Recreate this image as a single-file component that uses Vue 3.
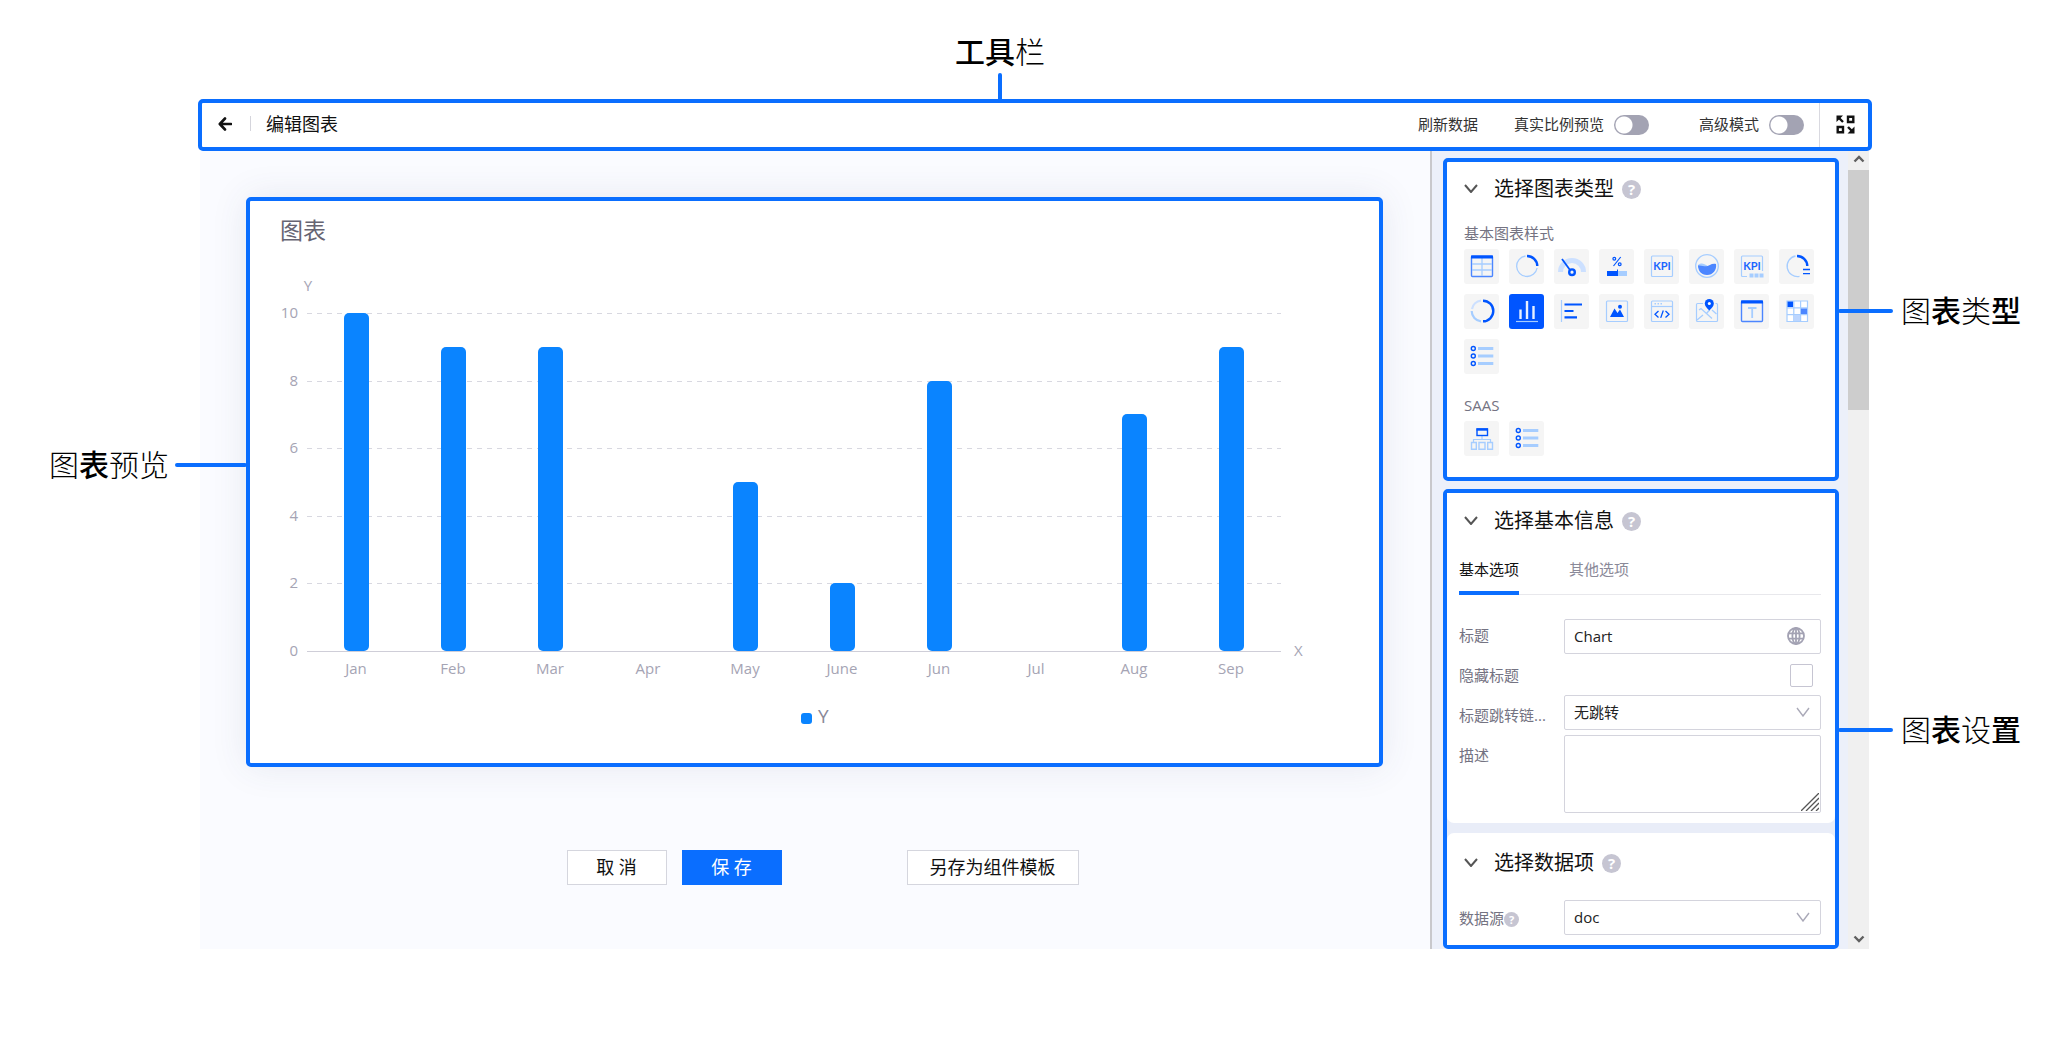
<script setup>
import { ref } from 'vue'

const realScale = ref(false)
const advanced = ref(false)
const title = ref('Chart')
const hideTitle = ref(false)
const description = ref('')
const activeTab = ref(0)
const selectedType = ref('bar')

const tabs = ['基本选项', '其他选项']

// Callout captions: each glyph carries its own weight
const callouts = {
  toolbar: [['工', true], ['具', true], ['栏', false]],
  preview: [['图', false], ['表', true], ['预', false], ['览', false]],
  types: [['图', false], ['表', true], ['类', false], ['型', true]],
  settings: [['图', false], ['表', true], ['设', false], ['置', true]],
}

// Chart geometry
const left = 57
const right = 1031
const base = 450
const months = [
  ['Jan', 10], ['Feb', 9], ['Mar', 9], ['Apr', 0], ['May', 5],
  ['June', 2], ['Jun', 8], ['Jul', 0], ['Aug', 7], ['Sep', 9],
]
const ticks = [10, 8, 6, 4, 2, 0]
const yOf = (v) => Math.round(base - v * 33.8)
const xOf = (i) => Math.round(106 + i * 97.2)

const D = '#0055ff'
const L = '#a6cdff'
const listIcon = `<g fill="none" stroke="${D}" stroke-width="1.4"><circle cx="9.3" cy="9.5" r="2"/><circle cx="9.3" cy="17" r="2"/><circle cx="9.3" cy="24.5" r="2"/></g><path d="M14 9.5h15.300M14 17h15.300M14 24.500h15.300" stroke="${L}" stroke-width="3"/>`
const kpi = `<text x="18" y="21" text-anchor="middle" font-family="Lato, sans-serif" font-weight="700" font-size="11" fill="#1a66ff">KPI</text>`

const basicTypes = [
  { id: 'table', name: '表格', art: `<rect x="7.500" y="7" width="21" height="20.500" rx="1" fill="none" stroke="#4c86ff" stroke-width="1.400"/><path d="M8 15h20M8 21h20M18 9v18" stroke="${L}" stroke-width="1.300"/><path d="M7 8h22" stroke="${D}" stroke-width="3"/>` },
  { id: 'ring', name: '环图', art: `<path d="M16.500 7a10.300 10.300 0 1 0 11.600 12" fill="none" stroke="${L}" stroke-width="1.300"/><path d="M18 7a10.300 10.300 0 0 1 10.300 10" fill="none" stroke="${D}" stroke-width="2.400"/>` },
  { id: 'gauge', name: '仪表盘', art: `<path d="M6.500 23a11.500 11.500 0 0 1 23 0" fill="none" stroke="#cce0ff" stroke-width="5"/><path d="M8 10l8 11" stroke="${D}" stroke-width="1.800"/><circle cx="18" cy="23.200" r="2.800" fill="#f5f5f5" stroke="${D}" stroke-width="2.400"/>` },
  { id: 'progress', name: '进度条', art: `<path d="M21.700 8l-7.200 9" stroke="${D}" stroke-width="1.200"/><circle cx="15.300" cy="9.800" r="1.400" fill="none" stroke="${D}" stroke-width="1.200"/><circle cx="20.700" cy="15.200" r="1.400" fill="none" stroke="${D}" stroke-width="1.200"/><path d="M8 24.500h11" stroke="${D}" stroke-width="5"/><path d="M19 24.500h9" stroke="${L}" stroke-width="5"/><path d="M18.500 20.500v2" stroke="${D}"/>` },
  { id: 'kpi', name: '指标', art: `<rect x="7.500" y="7" width="21" height="20.500" rx="1" fill="none" stroke="${L}" stroke-width="1.200"/>${kpi}` },
  { id: 'liquid', name: '水位图', art: `<circle cx="18" cy="17" r="11.300" fill="none" stroke="${L}" stroke-width="1.300"/><path d="M9 16c4-3 6-1 9 0.500v2H9z" fill="${L}"/><path d="M9 16.500c3-.5 6 1 8.500.8s5-3.300 9.500-2.300c1 6-3 11-9 11s-9-4.500-9-9.500z" fill="#4c86ff"/>` },
  { id: 'kpis', name: '指标组', art: `<path d="M13 27.500H8.500a1 1 0 0 1-1-1V8a1 1 0 0 1 1-1h19a1 1 0 0 1 1 1v14" fill="none" stroke="${L}" stroke-width="1.200"/>${kpi}<path d="M15.500 26.500h14" stroke="${L}" stroke-width="4" stroke-dasharray="4 1"/>` },
  { id: 'ringlist', name: '环图列表', art: `<path d="M16.500 7a10.300 10.300 0 1 0 4 20.400" fill="none" stroke="${L}" stroke-width="1.300"/><path d="M18 7a10.300 10.300 0 0 1 10.300 10" fill="none" stroke="${D}" stroke-width="2.400"/><path d="M24 20.500h7M24 24.700h7" stroke="${D}" stroke-width="1.300"/>` },
  { id: 'pie', name: '饼图', art: `<path d="M17 27.300a10.300 10.300 0 0 1-9.300-10.300" fill="none" stroke="${L}" stroke-width="2.200"/><path d="M8 15a10.300 10.300 0 0 1 9-8.300" fill="none" stroke="#cce0ff" stroke-width="2.200"/><path d="M19 6.700a10.300 10.300 0 0 1 0 20.600" fill="none" stroke="${D}" stroke-width="2.400"/>` },
  { id: 'bar', name: '柱状图', art: `<path d="M11.500 15.500V25M18 7v18M24.500 12V25" stroke="#e6f0ff" stroke-width="2.400"/><path d="M7 27.500h22" stroke="#a6cdff" stroke-width="1.200"/>` },
  { id: 'hbar', name: '条形图', art: `<path d="M7.500 6v22" stroke="${L}" stroke-width="1.200"/><path d="M10.500 10.500h17.500M10.500 17h9M10.500 23.300h12.500" stroke="${D}" stroke-width="2.200"/>` },
  { id: 'image', name: '图片', art: `<rect x="7.500" y="7" width="21" height="20.500" rx="1" fill="none" stroke="${L}" stroke-width="1.200"/><path d="M11 23l4.500-8.500 3 4.500 2.500-3.500L25 23z" fill="${D}"/><circle cx="21" cy="12.700" r="2" fill="${D}"/>` },
  { id: 'code', name: '代码', art: `<rect x="7.500" y="7" width="21" height="20.500" rx="1" fill="none" stroke="${L}" stroke-width="1.200"/><path d="M8 12.500h20" stroke="${L}" stroke-width="1.200"/><path d="M10.500 9.800h8" stroke="${L}" stroke-width="1.400" stroke-dasharray="1.500 1.500"/><path d="M14.500 17l-3.500 3.200 3.500 3.200M21.500 17l3.500 3.200-3.500 3.200M19.300 16.500l-2.600 7.400" fill="none" stroke="${D}" stroke-width="1.300"/>` },
  { id: 'map', name: '地图', art: `<path d="M14 9.500H8.500a1 1 0 0 0-1 1v16a1 1 0 0 0 1 1h19a1 1 0 0 0 1-1v-16a1 1 0 0 0-1-1h-1" fill="none" stroke="${L}" stroke-width="1.200"/><path d="M10 16l2-1.500 11 10M17.500 19.500l3-3.500M23 16l4.500 4M8 26l6-5" fill="none" stroke="${L}" stroke-width="1.300"/><path d="M20.300 16.500c-3-3-4.500-4.700-4.500-7a4.500 4.500 0 0 1 9 0c0 2.300-1.500 4-4.500 7z" fill="${D}"/><circle cx="20.300" cy="9.500" r="1.500" fill="#fff"/>` },
  { id: 'text', name: '文本', art: `<rect x="7.500" y="7" width="21" height="20.500" rx="1" fill="none" stroke="#4c86ff" stroke-width="1.400"/><path d="M7 8h22" stroke="${D}" stroke-width="3"/><path d="M14 14h8.500M18.200 14v10" stroke="${L}" stroke-width="1.800"/>` },
  { id: 'heat', name: '热力图', art: `<rect x="8" y="7" width="20.500" height="20.500" fill="#fff"/><path d="M8 7h20.500v20.500H8zM14.800 7v20.500M21.600 7v20.500M8 13.800h20.500M8 20.600h20.500" fill="none" stroke="${L}" stroke-width="1.200"/><path d="M8.500 7.500h5.500v5.500H8.500z" fill="${D}"/><path d="M22 14.500h6v5.500h-6z" fill="#4c86ff"/><path d="M15 21h6v6h-6z" fill="#bcd6ff"/>` },
  { id: 'list', name: '列表', art: listIcon },
]
const saasTypes = [
  { id: 'org', name: '组织图', art: `<path d="M18 15v3.500M9.500 21v-2.500h17V21" fill="none" stroke="${L}" stroke-width="1.200"/><rect x="13" y="8" width="10.500" height="6.500" fill="none" stroke="${D}" stroke-width="1.400"/><path d="M12.500 8.500h11.500" stroke="${D}" stroke-width="2.400"/><path d="M7.500 21.500h4.800v6.700H7.500zM15 21.500h6v6.700h-6zM23.700 21.500h4.800v6.700h-4.800z" fill="none" stroke="${L}" stroke-width="1.400"/>` },
  { id: 'saas-list', name: '列表', art: listIcon },
]
const typeGroups = [
  { label: '基本图表样式', items: basicTypes },
  { label: 'SAAS', items: saasTypes },
]
</script>

<template>
  <main class="page">
    <div class="editor">
      <header class="toolbar">
        <div class="callout callout-top">
          <span class="caption"><span v-for="c in callouts.toolbar" :key="c[0]" :class="{ heavy: c[1] }">{{ c[0] }}</span></span>
          <i class="lead"></i>
        </div>
        <button class="back" aria-label="返回">
          <svg width="14" height="14" viewBox="0 0 14 14"><path d="M7 1.500L1.800 7 7 12.500M2 7h11" fill="none" stroke="#111" stroke-width="2.600" stroke-linecap="round" stroke-linejoin="round" /></svg>
        </button>
        <i class="bar"></i>
        <h1>编辑图表</h1>
        <div class="tools">
          <button class="refresh">刷新数据</button>
          <label class="toggle"><span>真实比例预览</span><input v-model="realScale" type="checkbox" role="switch" /></label>
          <label class="toggle advanced"><span>高级模式</span><input v-model="advanced" type="checkbox" role="switch" /></label>
          <button class="full" aria-label="全屏">
            <svg width="19" height="19" viewBox="0 0 19 19" fill="none" stroke="#111" stroke-width="2.400">
              <path d="M12 1.700h5.300V7H12zM1.700 12H7v5.300H1.700z" />
              <path d="M2 2l5 5M12 12l4 4" />
              <path d="M.5.500H7L.500 7zM18.500 11.500V18.500h-7z" fill="#111" stroke="none" />
            </svg>
          </button>
        </div>
      </header>

      <div class="workspace">
        <section class="canvas">
          <div class="preview">
            <div class="callout callout-left">
              <span class="caption"><span v-for="c in callouts.preview" :key="c[0]" :class="{ heavy: c[1] }">{{ c[0] }}</span></span>
              <i class="lead"></i>
            </div>
            <svg class="chart" viewBox="0 0 1129 562" role="img" aria-label="图表">
              <text class="chart-title" x="30" y="38">图表</text>
              <text class="axis" x="58" y="90" text-anchor="middle">Y</text>
              <g v-for="t in ticks" :key="t">
                <line :x1="left" :x2="right" :y1="yOf(t) + 0.5" :y2="yOf(t) + 0.5" class="grid" />
                <text class="axis" x="48" :y="yOf(t) + 5" text-anchor="end">{{ t }}</text>
              </g>
              <line :x1="left" :x2="right" y1="450.5" y2="450.5" class="base" />
              <template v-for="(m, i) in months" :key="m[0]">
                <rect v-if="m[1]" :x="xOf(i) - 12" :y="yOf(m[1])" width="25" :height="base - yOf(m[1])" rx="5" fill="#0a84ff" />
                <text class="axis" :x="xOf(i)" y="473" text-anchor="middle">{{ m[0] }}</text>
              </template>
              <text class="axis" x="1044" y="455">X</text>
              <rect x="551" y="512" width="11" height="11" rx="3" fill="#0a84ff" />
              <text class="legend" x="568" y="522">Y</text>
            </svg>
          </div>
          <div class="actions">
            <button class="btn">取 消</button>
            <button class="btn primary">保 存</button>
            <button class="btn template">另存为组件模板</button>
          </div>
        </section>

        <aside class="side">
          <div class="panels">
            <section class="outline types">
              <div class="callout callout-right types-note">
                <i class="lead"></i>
                <span class="caption"><span v-for="c in callouts.types" :key="c[0]" :class="{ heavy: c[1] }">{{ c[0] }}</span></span>
              </div>
              <h2>
                <svg class="fold" viewBox="0 0 14 9"><path d="M1 1l6 7 6-7" /></svg>选择图表类型<span class="help">?</span>
              </h2>
              <div v-for="g in typeGroups" :key="g.label" class="group">
                <h3>{{ g.label }}</h3>
                <div class="tiles">
                  <button v-for="t in g.items" :key="t.id" class="tile" :class="{ on: t.id === selectedType }" :aria-label="t.name" @click="selectedType = t.id">
                    <svg width="35" height="35" viewBox="0 0 35 35" v-html="t.art"></svg>
                  </button>
                </div>
              </div>
            </section>

            <section class="outline settings">
              <div class="callout callout-right settings-note">
                <i class="lead"></i>
                <span class="caption"><span v-for="c in callouts.settings" :key="c[0]" :class="{ heavy: c[1] }">{{ c[0] }}</span></span>
              </div>
              <div class="card info">
                <h2>
                  <svg class="fold" viewBox="0 0 14 9"><path d="M1 1l6 7 6-7" /></svg>选择基本信息<span class="help">?</span>
                </h2>
                <nav class="tabs">
                  <button v-for="(t, i) in tabs" :key="t" :class="{ current: i === activeTab }" @click="activeTab = i">{{ t }}</button>
                </nav>
                <div class="field">
                  <label for="f-title">标题</label>
                  <div class="control">
                    <input id="f-title" v-model="title" type="text" />
                    <svg class="globe" viewBox="0 0 18 18" fill="none" stroke="#a3a2b3" stroke-width="1.800"><circle cx="9" cy="9" r="8" /><ellipse cx="9" cy="9" rx="3.600" ry="8" /><path d="M1.500 6.300h15M1.500 11.700h15M9 1v16" /></svg>
                  </div>
                </div>
                <div class="field check">
                  <label for="f-hide">隐藏标题</label>
                  <input id="f-hide" v-model="hideTitle" type="checkbox" />
                </div>
                <div class="field">
                  <label for="f-link" class="low">标题跳转链...</label>
                  <div class="control">
                    <select id="f-link"><option>无跳转</option></select>
                    <svg class="caret" viewBox="0 0 14 10"><path d="M1 1l6 8 6-8" /></svg>
                  </div>
                </div>
                <div class="field area">
                  <label for="f-desc" class="low">描述</label>
                  <div class="control">
                    <textarea id="f-desc" v-model="description"></textarea>
                    <svg class="grip" viewBox="0 0 18 18"><path d="M0 18L18 0M5 18L18 5M10 18l8-8M15 18l3-3" stroke="#555" stroke-width="1.300" /></svg>
                  </div>
                </div>
              </div>
              <div class="card data">
                <h2>
                  <svg class="fold" viewBox="0 0 14 9"><path d="M1 1l6 7 6-7" /></svg>选择数据项<span class="help">?</span>
                </h2>
                <div class="field">
                  <label for="f-source">数据源<span class="help small">?</span></label>
                  <div class="control">
                    <select id="f-source"><option>doc</option></select>
                    <svg class="caret" viewBox="0 0 14 10"><path d="M1 1l6 8 6-8" /></svg>
                  </div>
                </div>
              </div>
            </section>
          </div>
          <div class="scroll" aria-hidden="true">
            <svg class="arrow" viewBox="0 0 12 8"><path d="M1.500 6.500L6 2l4.500 4.500" /></svg>
            <i class="thumb"></i>
            <svg class="arrow down" viewBox="0 0 12 8"><path d="M1.500 1.500L6 6l4.500-4.500" /></svg>
          </div>
        </aside>
      </div>
    </div>
  </main>
</template>

<style>
body {
  margin: 0;
  background: #fff;
}
</style>

<style scoped>
* {
  box-sizing: border-box;
}
.page {
  padding: 99px 197px 100px 198px;
  font-family: "Open Sans", "Noto Sans CJK SC", sans-serif;
  font-size: 15px;
  color: #111;
}
h1, h2, h3 {
  margin: 0;
  font-weight: 400;
}
button {
  padding: 0;
  border: 0;
  background: none;
  font: inherit;
  color: inherit;
  cursor: pointer;
}

/* Blue outlines and callouts */
.toolbar, .preview, .outline {
  position: relative;
  border: 4px solid #0a6eff;
  border-radius: 5px;
  background: #fff;
}
.callout {
  position: absolute;
  display: flex;
  align-items: center;
  gap: 6px;
  z-index: 2;
}
.caption {
  font-size: 30px;
  line-height: 30px;
  font-weight: 300;
  color: #000;
  white-space: nowrap;
}
.heavy {
  font-weight: 500;
}
.lead {
  flex: none;
  width: 55px;
  height: 4px;
  border-radius: 2px;
  background: #0a6eff;
}
.callout-top {
  flex-direction: column;
  gap: 6px;
  bottom: 100%;
  left: 0;
  right: 70px;
}
.callout-top .lead {
  width: 4px;
  height: 30px;
}
.callout-left {
  right: 100%;
  top: 249px;
  margin-right: 3px;
}
.callout-left .lead {
  width: 72px;
}
.callout-right {
  left: 100%;
  margin-left: 3px;
  gap: 8px;
}
.types-note {
  top: 134px;
}
.settings-note {
  top: 222px;
}

/* Toolbar */
.toolbar {
  display: flex;
  align-items: center;
  height: 52px;
  padding: 0 0 3px 16px;
  z-index: 1;
}
.back {
  width: 14px;
  height: 14px;
  line-height: 0;
}
.bar {
  width: 1px;
  height: 15px;
  margin: 0 15px 0 18px;
  background: #d5d5dc;
}
h1 {
  font-size: 18px;
  line-height: 24px;
}
.tools {
  display: flex;
  align-items: center;
  height: 44px;
  margin: 0 0 -3px auto;
  color: #333;
}
.refresh, .toggle span {
  padding-bottom: 4px;
}
.refresh {
  margin-right: 36px;
}
.toggle {
  display: flex;
  align-items: center;
  gap: 10px;
}
.toggle input {
  appearance: none;
  width: 35px;
  height: 20px;
  margin: 0;
  border-radius: 10px;
  background: radial-gradient(circle at 10px 10px, #fff 8px, transparent 9px) #a3a3b3;
}
.toggle input:checked {
  background: radial-gradient(circle at 25px 10px, #fff 8px, transparent 9px) #0a6eff;
}
.advanced {
  margin: 0 15px 0 50px;
}
.full {
  display: grid;
  place-items: center;
  align-self: stretch;
  width: 49px;
  padding: 0 0 2px 2px;
  border-left: 1px solid #d9d9e0;
}

/* Workspace */
.workspace {
  display: flex;
  margin: 0 3px 0 2px;
}
.canvas {
  flex: 1;
  min-width: 0;
  padding: 46px 47px 0 46px;
  background: #fafbff;
}
.preview {
  box-shadow: 0 0 36px rgba(60, 70, 110, 0.1);
}
.chart {
  display: block;
  width: 100%;
  font-family: "Open Sans", "Noto Sans CJK SC", sans-serif;
}
.chart-title {
  font-size: 23px;
  fill: #666472;
}
.axis {
  font-size: 15px;
  fill: #a5a4b4;
}
.legend {
  font-size: 19px;
  fill: #8a8998;
}
.grid {
  stroke: #d8d8e0;
  stroke-dasharray: 5 5;
}
.base {
  stroke: #cfced8;
}
.actions {
  display: flex;
  justify-content: center;
  gap: 15px;
  padding: 83px 0 0 16px;
}
.btn {
  width: 100px;
  height: 35px;
  padding-bottom: 1px;
  border: 1px solid #d5d6de;
  background: #fff;
  font-size: 18px;
  line-height: 24px;
}
.primary {
  border-color: #0a6eff;
  background: #0a6eff;
  color: #fff;
}
.template {
  width: 172px;
  margin-left: 110px;
}

/* Side column */
.side {
  display: flex;
  flex: none;
  width: 439px;
  border-left: 2px solid #c8c8cc;
  background: #ecf0fa;
}
.panels {
  flex: 1;
  padding: 7px 9px 0 11px;
}
.types {
  margin-bottom: 8px;
  padding: 12px 17px 21px;
}
h2 {
  display: flex;
  align-items: center;
  height: 30px;
  font-size: 20px;
  line-height: 30px;
}
.fold {
  width: 14px;
  height: 9px;
  margin: 0 16px 2px 0;
  fill: none;
  stroke: #555;
  stroke-width: 2;
}
.help {
  width: 19px;
  height: 19px;
  margin-left: 8px;
  border-radius: 50%;
  background: #c6c5d2;
  color: #fff;
  font-size: 15px;
  font-weight: 700;
  line-height: 19px;
  text-align: center;
}
.small {
  display: inline-block;
  width: 15px;
  height: 15px;
  margin-left: 0;
  font-size: 11px;
  line-height: 15px;
}
h3 {
  font-size: 15px;
  line-height: 20px;
  color: #747382;
}
.group {
  margin-top: 19px;
}
.group + .group {
  margin-top: 21px;
}
.tiles {
  display: flex;
  flex-wrap: wrap;
  gap: 10px;
  margin-top: 6px;
}
.tile {
  width: 35px;
  height: 35px;
  border-radius: 3px;
  background: #f5f5f5;
  line-height: 0;
}
.tile.on {
  background: #0055ff;
}

.settings {
  background: #e9edf8;
}
.card {
  padding: 0 14px 0 12px;
  border-radius: 0 0 7px 7px;
  background: #fff;
}
.card h2 {
  padding-left: 5px;
}
.info {
  padding-top: 13px;
  padding-bottom: 10px;
}
.data {
  margin-top: 10px;
  padding-top: 15px;
  padding-bottom: 10px;
  border-radius: 7px 7px 0 0;
}
.tabs {
  display: flex;
  gap: 50px;
  height: 40px;
  margin: 19px 0 24px;
  border-bottom: 1px solid #e8e8ec;
}
.tabs button {
  height: 40px;
  padding-bottom: 8px;
  border-bottom: 4px solid transparent;
  line-height: 20px;
  color: #8a8998;
}
.tabs .current {
  border-color: #0a6eff;
  color: #111;
}
.field {
  display: flex;
  align-items: flex-start;
  margin-bottom: 5px;
}
.field label {
  flex: none;
  width: 105px;
  padding-top: 6px;
  line-height: 20px;
  color: #747382;
}
.field .low {
  padding-top: 10px;
}
.control {
  position: relative;
  flex: 1;
}
.control input, .control select, .control textarea {
  display: block;
  appearance: none;
  width: 100%;
  height: 35px;
  padding: 0 9px 1px;
  border: 1px solid #d4d4dd;
  border-radius: 2px;
  background: #fff;
  font: inherit;
  color: #222;
  outline: none;
}
.control textarea {
  height: 78px;
  resize: none;
}
.globe, .caret, .grip {
  position: absolute;
  pointer-events: none;
}
.globe {
  right: 16px;
  top: 8px;
  width: 18px;
  height: 18px;
}
.caret {
  right: 11px;
  top: 12px;
  width: 14px;
  height: 10px;
  fill: none;
  stroke: #aaa9b8;
  stroke-width: 1.4;
}
.grip {
  right: 2px;
  bottom: 2px;
  width: 18px;
  height: 18px;
}
.check {
  justify-content: space-between;
  height: 31px;
}
.check input {
  appearance: none;
  width: 23px;
  height: 23px;
  margin: 5px 8px 0 0;
  border: 1px solid #c6c5d2;
  border-radius: 2px;
  background: #fff;
}
.area {
  margin-bottom: 0;
}
.data .field {
  margin: 22px 0 0;
}
.data label {
  padding-top: 8px;
}

/* Scroll track */
.scroll {
  display: flex;
  flex-direction: column;
  align-items: center;
  width: 21px;
  background: #f0f0f0;
}
.arrow {
  width: 12px;
  height: 8px;
  margin: 4px 0 7px;
  fill: none;
  stroke: #606060;
  stroke-width: 2.4;
}
.thumb {
  width: 21px;
  height: 240px;
  background: #cdcdcd;
}
.down {
  margin: auto 0 6px;
}
</style>
